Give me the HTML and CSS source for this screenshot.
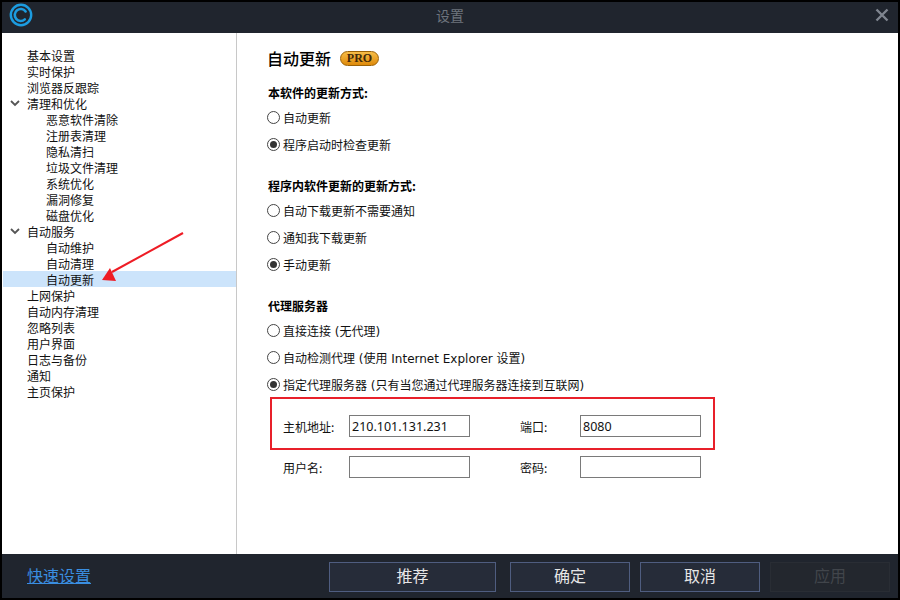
FILE: index.html
```html
<!DOCTYPE html>
<html lang="zh">
<head>
<meta charset="utf-8">
<title>设置</title>
<link rel="stylesheet" href="styles.css">
</head>
<body>
<div class="window">
  <header class="titlebar">
    <svg class="logo" width="26" height="26" viewBox="0 0 26 26">
      <circle cx="13" cy="13" r="10.2" fill="none" stroke="#1c9ce0" stroke-width="2.4"/>
      <path d="M17.6 9.4 A6 6 0 1 0 16.8 17.4" fill="none" stroke="#1c9ce0" stroke-width="2.6" stroke-linecap="round"/>
    </svg>
    <span class="title">设置</span>
    <svg class="close" width="14" height="14" viewBox="0 0 14 14">
      <path d="M1.5 1.5 L12.5 12.5 M12.5 1.5 L1.5 12.5" stroke="#7f858f" stroke-width="2.4"/>
    </svg>
  </header>
  <div class="main">
    <nav class="sidebar">
      <div class="row">基本设置</div>
      <div class="row">实时保护</div>
      <div class="row">浏览器反跟踪</div>
      <div class="row"><svg class="chev" width="10" height="7" viewBox="0 0 10 7"><path d="M1 1 L5 5 L9 1" fill="none" stroke="#555" stroke-width="1.8"/></svg>清理和优化</div>
      <div class="row child">恶意软件清除</div>
      <div class="row child">注册表清理</div>
      <div class="row child">隐私清扫</div>
      <div class="row child">垃圾文件清理</div>
      <div class="row child">系统优化</div>
      <div class="row child">漏洞修复</div>
      <div class="row child">磁盘优化</div>
      <div class="row"><svg class="chev" width="10" height="7" viewBox="0 0 10 7"><path d="M1 1 L5 5 L9 1" fill="none" stroke="#555" stroke-width="1.8"/></svg>自动服务</div>
      <div class="row child">自动维护</div>
      <div class="row child">自动清理</div>
      <div class="row child selected">自动更新</div>
      <div class="row">上网保护</div>
      <div class="row">自动内存清理</div>
      <div class="row">忽略列表</div>
      <div class="row">用户界面</div>
      <div class="row">日志与备份</div>
      <div class="row">通知</div>
      <div class="row">主页保护</div>
      <svg class="arrow" width="100" height="70" viewBox="0 0 100 70">
        <path d="M81 2 L10 41" stroke="#ee1c25" stroke-width="2"/>
        <path d="M0 49 L8 37 L14 50 Z" fill="#ee1c25"/>
      </svg>
    </nav>
    <section class="content">
      <div class="heading">
        <h1>自动更新</h1>
        <span class="pro">PRO</span>
      </div>
      <h2 class="first">本软件的更新方式:</h2>
      <div class="radio"><i class="dot"></i>自动更新</div>
      <div class="radio"><i class="dot on"></i>程序启动时检查更新</div>
      <h2>程序内软件更新的更新方式:</h2>
      <div class="radio"><i class="dot"></i>自动下载更新不需要通知</div>
      <div class="radio"><i class="dot"></i>通知我下载更新</div>
      <div class="radio"><i class="dot on"></i>手动更新</div>
      <h2>代理服务器</h2>
      <div class="radio"><i class="dot"></i>直接连接 (无代理)</div>
      <div class="radio"><i class="dot"></i>自动检测代理 (使用 Internet Explorer 设置)</div>
      <div class="radio"><i class="dot on"></i>指定代理服务器 (只有当您通过代理服务器连接到互联网)</div>
      <div class="proxy">
        <div class="highlight"></div>
        <label>主机地址:</label><input class="field" value="210.101.131.231">
        <label>端口:</label><input class="field" value="8080">
        <label>用户名:</label><input class="field">
        <label>密码:</label><input class="field">
      </div>
    </section>
  </div>
  <footer class="footer">
    <a class="quick" href="#">快速设置</a>
    <div class="buttons">
      <button class="btn wide">推荐</button>
      <button class="btn">确定</button>
      <button class="btn">取消</button>
      <button class="btn off" disabled>应用</button>
    </div>
  </footer>
</div>
</body>
</html>
```
FILE: styles.css
```css
* { box-sizing: border-box; }
html, body { margin: 0; height: 100%; }
body {
  width: 900px;
  height: 600px;
  overflow: hidden;
  background: #000;
  font-family: "Noto Sans CJK SC", "Liberation Sans", sans-serif;
  font-size: 12px;
  color: #111;
}
.window {
  height: 600px;
  padding: 2px;
  display: flex;
  flex-direction: column;
}
.titlebar {
  height: 31px;
  flex: none;
  background: #20252e;
  display: flex;
  align-items: center;
  position: relative;
  padding: 0 9px 5px 6px;
  justify-content: space-between;
}
.title {
  font-size: 14px;
  color: #6e747d;
  position: absolute;
  left: 0;
  right: 0;
  text-align: center;
}
.main {
  flex: 1;
  display: flex;
  background: #fff;
  min-height: 0;
}
.sidebar {
  width: 235px;
  flex: none;
  border-right: 1px solid #c8c8c8;
  padding-top: 15px;
  position: relative;
  z-index: 0;
}
.row {
  height: 16px;
  line-height: 16px;
  padding-left: 25px;
  position: relative;
  white-space: nowrap;
}
.row.child { padding-left: 44px; }
.row.selected::before {
  content: "";
  position: absolute;
  left: 1px;
  right: 0;
  top: -1px;
  height: 16px;
  background: #cce4fb;
  z-index: -1;
}
.chev { position: absolute; left: 8px; top: 4px; }
.arrow { position: absolute; left: 100px; top: 198px; }
.content {
  flex: 1;
  padding: 14px 0 0 31px;
  min-width: 0;
}
.heading {
  display: flex;
  align-items: center;
  gap: 9px;
  height: 22px;
  margin-left: -1px;
}
h1 {
  margin: 0;
  font-size: 16px;
  font-weight: 500;
  color: #000;
}
.pro {
  width: 39px;
  height: 15px;
  border-radius: 8px;
  border: 1px solid #9c6206;
  background: linear-gradient(#f7bd48, #de8a0a);
  font-family: "Liberation Serif", serif;
  font-weight: 700;
  font-size: 12px;
  line-height: 13px;
  text-align: center;
  color: #43290a;
}
h2 {
  margin: 24px 0 0;
  font-size: 12px;
  font-weight: 700;
  height: 18px;
  line-height: 18px;
  color: #000;
}
h2.first { margin-top: 15px; }
.radio {
  display: flex;
  align-items: center;
  height: 18px;
  margin-top: 9px;
  white-space: nowrap;
  color: #111;
  font-family: "DejaVu Sans", "Noto Sans CJK SC", sans-serif;
}
h2 + .radio { margin-top: 6px; }
.dot {
  width: 13px;
  height: 13px;
  border: 1px solid #444;
  border-radius: 50%;
  background: #fff;
  margin: 0 3px 0 -1px;
  flex: none;
  position: relative;
}
.dot.on::after {
  content: "";
  position: absolute;
  left: 2px;
  top: 2px;
  width: 7px;
  height: 7px;
  border-radius: 50%;
  background: #333;
}
.proxy {
  position: relative;
  display: grid;
  grid-template-columns: 66px 121px 50px 60px 121px;
  grid-template-rows: 22px 22px;
  row-gap: 19px;
  margin: 22px 0 0 15px;
  align-items: center;
}
.proxy label:nth-of-type(2n) { grid-column: 4; }
.proxy input:nth-of-type(2n) { grid-column: 5; }
.proxy label:nth-of-type(2n+1) { grid-column: 1; }
.proxy input:nth-of-type(2n+1) { grid-column: 2; }
.highlight {
  position: absolute;
  left: -13px;
  top: -18px;
  width: 445px;
  height: 53px;
  border: 2px solid #e8202a;
  pointer-events: none;
}
.field {
  width: 121px;
  height: 22px;
  border: 1px solid #7a7a7a;
  background: #fff;
  padding: 0 2px;
  font-family: "Noto Sans", sans-serif;
  font-size: 12.5px;
  color: #111;
  outline: none;
  border-radius: 0;
}
.footer {
  height: 44px;
  flex: none;
  background: #20252e;
  display: flex;
  align-items: center;
  justify-content: space-between;
  padding: 0 8px 0 25px;
}
.quick {
  font-size: 16px;
  color: #3a8ee0;
  text-decoration: underline;
  margin-top: -2px;
}
.buttons {
  display: flex;
  gap: 10px;
  margin-top: 1px;
}
.btn {
  width: 120px;
  height: 30px;
  background: #262c39;
  border: 1px solid #4f5d80;
  color: #e6e6e6;
  font-family: inherit;
  font-size: 16px;
  padding: 0 0 4px;
}
.btn.wide { width: 167px; margin-right: 4px; }
.btn.off {
  background: #23272e;
  border-color: #292d34;
  color: #41454b;
}
```
